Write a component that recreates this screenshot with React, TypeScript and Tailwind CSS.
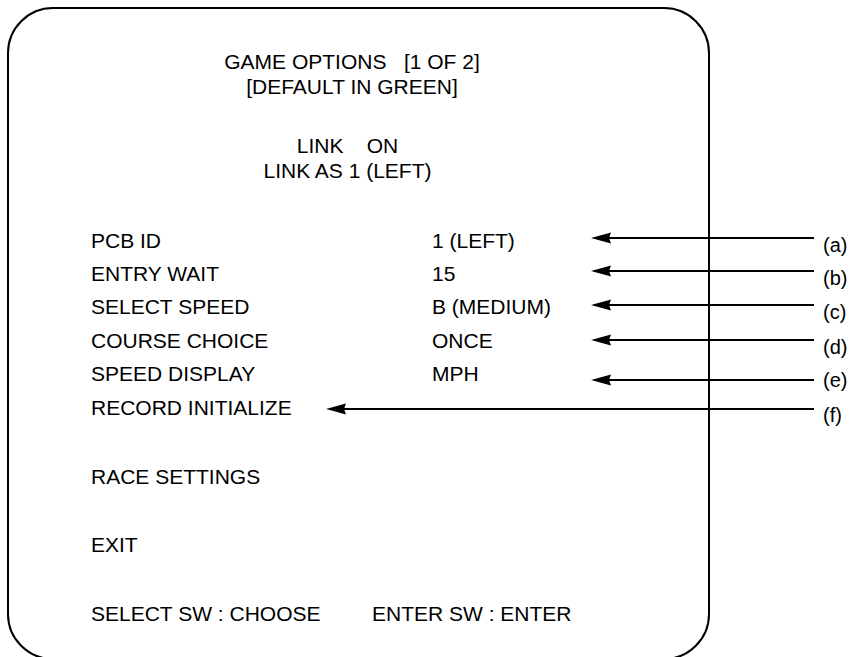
import React from 'react';

type Row = {
  label: string;
  value?: string;
  tag: string;
  labelW: string;
  arrowW: number;
  arrowShift: string;
  tagShift: string;
};

const rows: Row[] = [
  { label: 'PCB ID', value: '1 (LEFT)', tag: '(a)', labelW: 'w-[341px]', arrowW: 223, arrowShift: 'mb-[6px]', tagShift: 'mt-[8px]' },
  { label: 'ENTRY WAIT', value: '15', tag: '(b)', labelW: 'w-[341px]', arrowW: 223, arrowShift: 'mb-[6px]', tagShift: 'mt-[8px]' },
  { label: 'SELECT SPEED', value: 'B (MEDIUM)', tag: '(c)', labelW: 'w-[341px]', arrowW: 223, arrowShift: 'mb-[4px]', tagShift: 'mt-[10px]' },
  { label: 'COURSE CHOICE', value: 'ONCE', tag: '(d)', labelW: 'w-[341px]', arrowW: 223, arrowShift: 'mb-[2px]', tagShift: 'mt-[12px]' },
  { label: 'SPEED DISPLAY', value: 'MPH', tag: '(e)', labelW: 'w-[341px]', arrowW: 223, arrowShift: 'mt-[12px]', tagShift: 'mt-[12px]' },
  { label: 'RECORD INITIALIZE', tag: '(f)', labelW: 'w-[235px]', arrowW: 488, arrowShift: 'mt-[2px]', tagShift: 'mt-[14px]' },
];

// left-pointing callout arrow, tip on the left
const Arrow = ({ width, className }: { width: number; className?: string }) => (
  <svg width={width} height={12} viewBox={`0 0 ${width} 12`} className={`shrink-0 ${className ?? ''}`}>
    <line x1={16} y1={6} x2={width} y2={6} stroke="black" strokeWidth={2.2} />
    <path d="M0 6 L20 0.5 L18 6 L20 11.5 Z" fill="black" />
  </svg>
);

export default function App() {
  return (
    <div className="h-[657px] w-[860px] overflow-hidden bg-white text-black font-['Liberation_Sans',Arial,sans-serif]">
      <div className="ml-[7px] mt-[7px] h-[653px] w-[703px] rounded-[46px] border-[2.5px] border-black text-[21px]">
        {/* header */}
        <div className="pt-[40px] pr-[13px] text-center leading-[25px]">
          <div className="whitespace-pre">GAME OPTIONS   [1 OF 2]</div>
          <div>[DEFAULT IN GREEN]</div>
        </div>
        <div className="mt-[34px] pr-[22px] text-center leading-[25px]">
          <div className="whitespace-pre">LINK    ON</div>
          <div>LINK AS 1 (LEFT)</div>
        </div>

        {/* option rows with callouts */}
        <div className="mt-[41px] pl-[82px]">
          {rows.map((r) => (
            <div key={r.tag} className="flex h-[33.4px] items-center leading-[24px]">
              <span className={`shrink-0 ${r.labelW}`}>{r.label}</span>
              {r.value && <span className="w-[159px] shrink-0">{r.value}</span>}
              <Arrow width={r.arrowW} className={r.arrowShift} />
              <span className={`ml-[9px] shrink-0 text-[20px] leading-[18px] ${r.tagShift}`}>{r.tag}</span>
            </div>
          ))}
        </div>

        <div className="pl-[82px] leading-[33.4px]">
          <div className="mt-[36px]">RACE SETTINGS</div>
          <div className="mt-[34px]">EXIT</div>
          <div className="mt-[36px] flex">
            <span className="w-[281px] shrink-0">SELECT SW : CHOOSE</span>
            <span>ENTER SW : ENTER</span>
          </div>
        </div>
      </div>
    </div>
  );
}
